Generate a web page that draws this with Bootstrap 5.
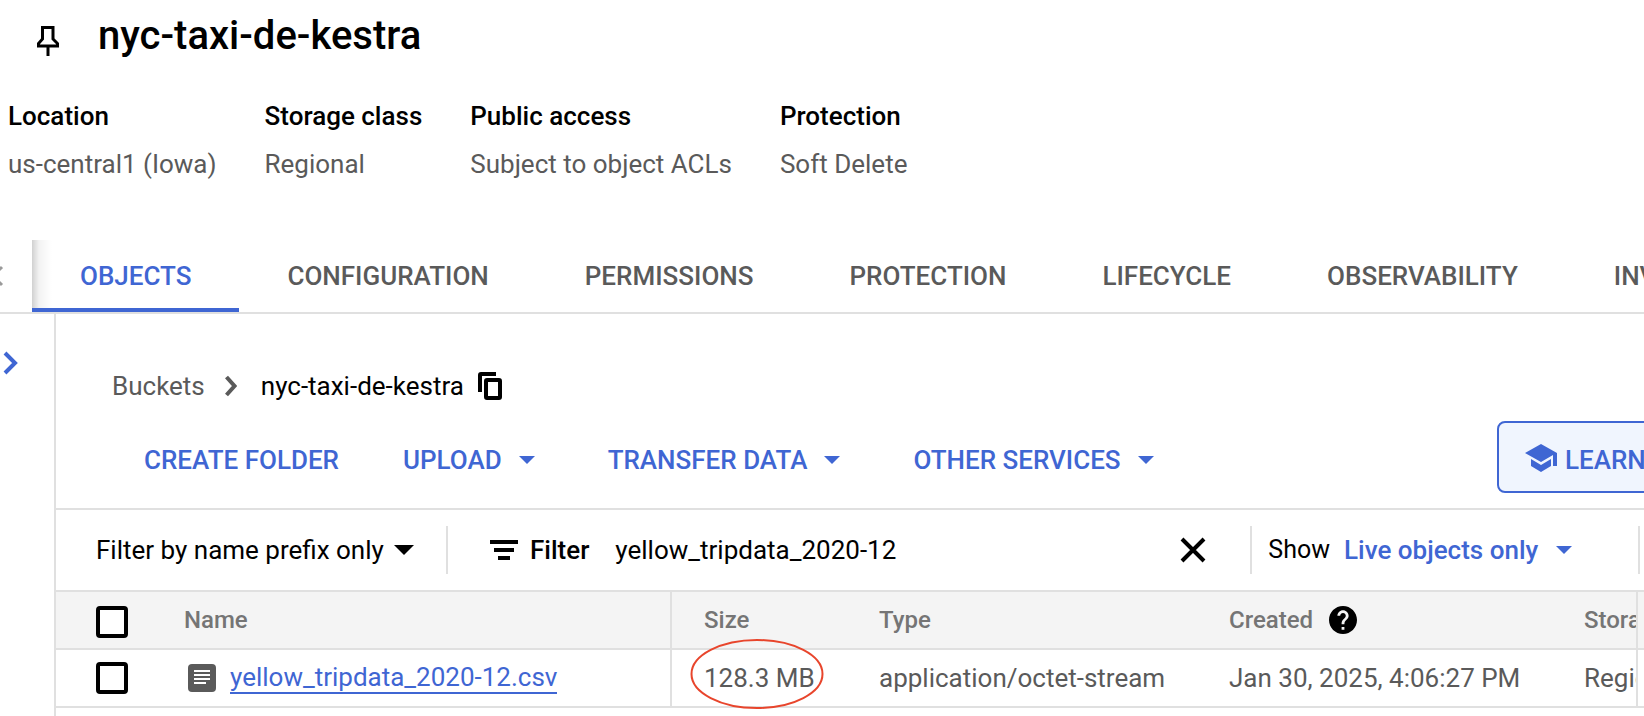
<!DOCTYPE html>
<html lang="en">
<head>
<meta charset="utf-8">
<meta name="viewport" content="width=device-width, initial-scale=1">
<title>nyc-taxi-de-kestra – Bucket details</title>
<link href="https://cdn.jsdelivr.net/npm/bootstrap@5.3.0/dist/css/bootstrap.min.css" rel="stylesheet">
<style>
  :root { --line: #e0e0e0; --blue: #3f66d3; --ink: #000; --grey: #5a5a5a; }
  body { font-family: Roboto, "Liberation Sans", sans-serif; font-size: 26px; line-height: 32px; color: var(--ink); background: #fff; overflow-x: hidden; }
  svg { display: block; flex: none; }
  button { font-family: inherit; }
  .plain { border: 0; background: none; padding: 0; color: inherit; line-height: 32px; }
  .page-title { font-size: 40px; line-height: 48px; font-weight: 500; }
  .head-row { padding: 12px 36px 0; gap: 38px; }
  .pin-btn { margin-top: 14px; }
  .facts { padding: 40px 8px 0; gap: 48px; }
  .facts dt { font-weight: 500; margin-bottom: 16px; }
  .facts dd { color: var(--grey); margin: 0; }
  .tab-bar { margin-top: 60px; border-bottom: 2px solid var(--line); height: 74px; overflow: hidden; }
  .scroll-left { width: 32px; flex: none; color: #9a9a9a; }
  .tab-strip { background: linear-gradient(to right, rgba(0,0,0,.18), rgba(0,0,0,.05) 7px, transparent 20px) no-repeat; }
  .tab-link { padding: 20px 48px 16px; font-weight: 500; color: var(--grey); text-decoration: none; white-space: nowrap; border-bottom: 4px solid transparent; }
  .tab-link.active { color: var(--blue); border-bottom-color: var(--blue); }
  .rail { width: 56px; border-right: 2px solid var(--line); color: var(--blue); padding: 36px 0 0 2px; }
  .crumbs { padding: 56px 56px 0; }
  .crumbs a { color: var(--grey); text-decoration: none; }
  .crumb-sep { margin: 0 24px 0 20px; }
  .copy-btn { margin-left: 14px; }
  .actions { padding: 19px 0 15px 88px; }
  .act { font-weight: 500; color: var(--blue); gap: 17px; white-space: nowrap; }
  .act-list { gap: 73px; padding-top: 6px; }
  .act-first { margin-right: -9px; }
  .learn-slot { width: 147px; overflow: hidden; }
  .learn { border: 2px solid var(--blue); border-radius: 8px; background: #f0f5fe; height: 72px; padding: 2px 26px 0; gap: 8px; font-weight: 500; color: var(--blue); white-space: nowrap; }
  .filter-bar { border-top: 2px solid var(--line); height: 82px; padding: 0 4px 0 40px; }
  .vr-line { width: 2px; height: 48px; background: var(--line); flex: none; }
  .pick { appearance: none; border: 0; background: none; padding: 0; color: inherit; font: inherit; outline-offset: 4px; }
  .mode-pick { gap: 10px; margin-right: 32px; }
  .query-group { gap: 12px; padding: 0 44px 0 42px; }
  .query-label { font-weight: 500; margin-right: 14px; }
  .query { border: 0; padding: 0; background: none; min-width: 0; color: inherit; }
  .show-group { gap: 14px; padding: 0 66px 0 16px; }
  .show-label { font-size: 25px; }
  .objects { table-layout: fixed; width: 100%; margin: 0; border-collapse: separate; border-spacing: 0; }
  .objects th, .objects td { height: 58px; padding: 0 32px; border-bottom: 2px solid var(--line); white-space: nowrap; overflow: hidden; vertical-align: middle; }
  .objects th { border-top: 2px solid var(--line); height: 60px; background: #f4f4f4; color: #757575; font-size: 24px; font-weight: 500; }
  .objects td { color: var(--grey); }
  .objects .tick-cell { padding: 0 0 0 40px; }
  .objects .split { border-right: 2px solid var(--line); }
  .objects .cut { padding-right: 0; text-overflow: clip; }
  .objects .edge { padding: 0; }
  .objects .size-cell { overflow: visible; position: relative; }
  .tick { appearance: none; display: block; width: 32px; height: 32px; border: 4px solid #000; border-radius: 4px; background: #fff; margin: 0; }
  .objects th .tick { margin-top: 4px; }
  .tick:checked { background: #000; }
  .file-name { gap: 14px; padding-left: 4px; }
  .file-link { color: var(--blue); text-decoration: none; border-bottom: 2px solid var(--blue); line-height: 30px; }
  .file-link:hover { color: var(--blue); }
  .c-tick { width: 96px; } .c-size { width: 175px; } .c-type { width: 350px; } .c-created { width: 355px; } .c-storage { width: 86px; } .c-edge { width: 6px; }
  .ring { position: absolute; left: 18px; top: -12px; pointer-events: none; }
</style>
</head>
<body>
<div class="d-flex flex-column min-vh-100">
  <header>
    <div class="head-row d-flex align-items-start">
      <button type="button" class="plain pin-btn" aria-label="Pin bucket">
        <svg width="24" height="30" viewBox="0 0 24 30" fill="none" stroke="currentColor" stroke-width="3"><path d="M5 1.500H18.500M6.500 1.500V13L2.500 17.500V20H21.500V17.500L17 13V1.500M12 20V30"/></svg>
      </button>
      <h1 class="page-title m-0">nyc-taxi-de-kestra</h1>
    </div>
    <dl class="facts d-flex m-0">
      <div><dt>Location</dt><dd>us-central1 (Iowa)</dd></div>
      <div><dt>Storage class</dt><dd>Regional</dd></div>
      <div><dt>Public access</dt><dd>Subject to object ACLs</dd></div>
      <div><dt>Protection</dt><dd>Soft Delete</dd></div>
    </dl>
  </header>

  <nav class="tab-bar d-flex" aria-label="Bucket sections">
    <button type="button" class="plain scroll-left" aria-label="Scroll tabs left">
      <svg width="4" height="26" viewBox="0 0 4 26" fill="none" stroke="currentColor" stroke-width="3"><path d="M2 4L-7 13L2 22"/></svg>
    </button>
    <div class="tab-strip d-flex flex-grow-1 flex-nowrap">
      <a href="#" class="tab-link active" aria-current="page">OBJECTS</a>
      <a href="#" class="tab-link">CONFIGURATION</a>
      <a href="#" class="tab-link">PERMISSIONS</a>
      <a href="#" class="tab-link">PROTECTION</a>
      <a href="#" class="tab-link">LIFECYCLE</a>
      <a href="#" class="tab-link">OBSERVABILITY</a>
      <a href="#" class="tab-link">INVENTORY REPORTS</a>
    </div>
  </nav>

  <div class="d-flex flex-grow-1">
    <aside class="rail flex-shrink-0">
      <button type="button" class="plain" aria-label="Show folder browser">
        <svg width="18" height="26" viewBox="0 0 18 26" fill="none" stroke="currentColor" stroke-width="4"><path d="M3 3L13 13L3 23"/></svg>
      </button>
    </aside>

    <main class="flex-grow-1 overflow-hidden">
      <nav class="crumbs d-flex align-items-center" aria-label="Breadcrumb">
        <a href="#">Buckets</a>
        <svg class="crumb-sep" width="12" height="22" viewBox="0 0 12 22" fill="none" stroke="#5a5a5a" stroke-width="4"><path d="M1.500 2L9.500 11L1.500 20"/></svg>
        <span>nyc-taxi-de-kestra</span>
        <button type="button" class="plain copy-btn" aria-label="Copy bucket name">
          <svg width="24" height="28" viewBox="0 0 24 28" fill="none" stroke="currentColor" stroke-width="4"><path d="M2 20V3Q2 2 3 2H18"/><rect x="8" y="8" width="14" height="18" rx="1"/></svg>
        </button>
      </nav>

      <div class="actions d-flex align-items-center">
        <div class="act-list d-flex">
          <button type="button" class="plain act act-first">CREATE FOLDER</button>
          <button type="button" class="plain act d-flex align-items-center">UPLOAD <svg width="16" height="8" viewBox="0 0 16 8" fill="currentColor"><path d="M0 0H16L8 8Z"/></svg></button>
          <button type="button" class="plain act d-flex align-items-center">TRANSFER DATA <svg width="16" height="8" viewBox="0 0 16 8" fill="currentColor"><path d="M0 0H16L8 8Z"/></svg></button>
          <button type="button" class="plain act d-flex align-items-center">OTHER SERVICES <svg width="16" height="8" viewBox="0 0 16 8" fill="currentColor"><path d="M0 0H16L8 8Z"/></svg></button>
        </div>
        <div class="learn-slot ms-auto">
          <button type="button" class="learn d-flex align-items-center">
            <svg width="32" height="28" viewBox="0 0 32 28" fill="currentColor"><path d="M16 0L0 9L16 18L28 11V22H32V9ZM6 15V22L16 28L26 22V15L16 21Z"/></svg>
            <span class="pt-1">LEARN</span>
          </button>
        </div>
      </div>

      <form class="filter-bar d-flex align-items-center" onsubmit="return false">
        <div class="mode-pick d-flex align-items-center">
          <select class="pick" aria-label="Filter mode"><option>Filter by name prefix only</option></select>
          <svg width="20" height="10" viewBox="0 0 20 10"><path d="M0 0H20L10 10Z"/></svg>
        </div>
        <span class="vr-line"></span>
        <div class="query-group d-flex align-items-center flex-grow-1">
          <svg width="28" height="20" viewBox="0 0 28 20"><path d="M0 0H28V4H0ZM4 8H24V12H4ZM8 16H20V20H8Z"/></svg>
          <label for="query" class="query-label">Filter</label>
          <input id="query" class="query flex-grow-1" type="text" value="yellow_tripdata_2020-12">
          <button type="button" class="plain" aria-label="Clear filter">
            <svg width="26" height="26" viewBox="0 0 26 26" stroke="currentColor" stroke-width="4"><path d="M2 2L24 24M24 2L2 24"/></svg>
          </button>
        </div>
        <span class="vr-line"></span>
        <div class="show-group d-flex align-items-center">
          <label for="show" class="show-label">Show</label>
          <span class="d-flex align-items-center act">
            <select id="show" class="pick"><option>Live objects only</option></select>
            <svg width="16" height="8" viewBox="0 0 16 8" fill="currentColor"><path d="M0 0H16L8 8Z"/></svg>
          </span>
        </div>
        <span class="vr-line"></span>
      </form>

      <table class="objects">
        <colgroup><col class="c-tick"><col><col class="c-size"><col class="c-type"><col class="c-created"><col class="c-storage"><col class="c-edge"></colgroup>
        <thead>
          <tr>
            <th class="tick-cell" scope="col"><input type="checkbox" class="tick" aria-label="Select all objects"></th>
            <th class="split" scope="col">Name</th>
            <th scope="col">Size</th>
            <th scope="col">Type</th>
            <th scope="col"><span class="d-flex align-items-center gap-3">Created
              <svg width="28" height="28" viewBox="2 2 20 20" role="img" aria-label="Help"><path fill="#000" d="M12 2C6.480 2 2 6.480 2 12s4.480 10 10 10 10-4.480 10-10S17.520 2 12 2zm1 17h-2v-2h2v2zm2.070-7.750l-.9.920C13.450 12.900 13 13.500 13 15h-2v-.5c0-1.100.45-2.100 1.170-2.830l1.240-1.260c.37-.36.590-.86.590-1.410 0-1.100-.9-2-2-2s-2 .9-2 2H8c0-2.210 1.790-4 4-4s4 1.790 4 4c0 .88-.36 1.680-.93 2.250z"/></svg></span></th>
            <th class="split cut" scope="col">Storage class</th>
            <th class="edge"></th>
          </tr>
        </thead>
        <tbody>
          <tr>
            <td class="tick-cell"><input type="checkbox" class="tick" aria-label="Select yellow_tripdata_2020-12.csv"></td>
            <td class="split"><span class="file-name d-flex align-items-center">
              <svg width="28" height="28" viewBox="0 0 28 28"><rect width="28" height="28" rx="4" fill="#5a5a5a"/><path d="M6 7H22M6 11H22M6 15H22M6 19H18" stroke="#fff" stroke-width="2"/></svg>
              <a href="#" class="file-link">yellow_tripdata_2020-12.csv</a></span></td>
            <td class="size-cell">128.3 MB
              <svg class="ring" width="134" height="72" viewBox="0 0 134 72" fill="none" stroke="#e8452c" stroke-width="2"><ellipse cx="67" cy="36" rx="65.500" ry="34"/></svg></td>
            <td>application/octet-stream</td>
            <td>Jan 30, 2025, 4:06:27 PM</td>
            <td class="split cut">Regional</td>
            <td class="edge"></td>
          </tr>
        </tbody>
      </table>
    </main>
  </div>
</div>
<script src="https://cdn.jsdelivr.net/npm/bootstrap@5.3.0/dist/js/bootstrap.bundle.min.js"></script>
</body>
</html>
